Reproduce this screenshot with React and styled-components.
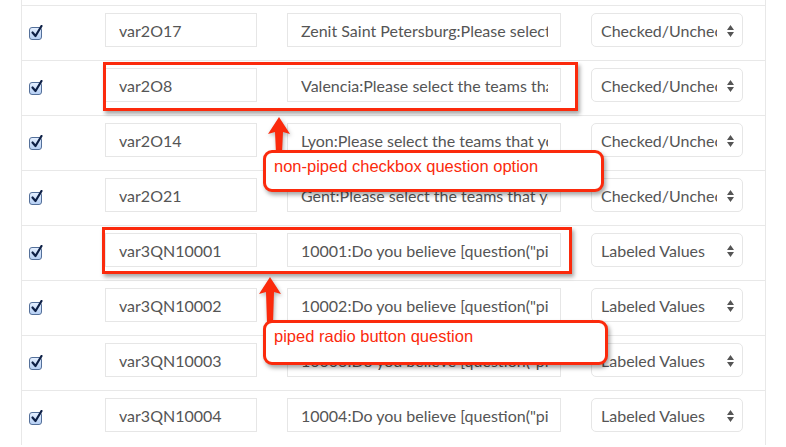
import React from "react";
import styled, { createGlobalStyle } from "styled-components";

const GlobalStyle = createGlobalStyle`
  html, body {
    margin: 0;
    padding: 0;
    background: #fff;
  }
  body {
    font-family: Lato, "Open Sans", sans-serif;
    overflow: hidden;
  }
`;

const Page = styled.div`
  position: relative;
  width: 786px;
  height: 447px;
  overflow: hidden;
  padding: 0 0 0 21px;
  box-sizing: border-box;
`;

const Table = styled.div`
  width: 745px;
  box-sizing: border-box;
  padding-top: 5px;
  border-left: 1px solid #e8e8e8;
  border-right: 1px solid #e8e8e8;
`;

const Row = styled.div`
  display: grid;
  grid-template-columns: 53px 152px 274px 152px;
  column-gap: 30px;
  align-items: start;
  height: 55px;
  box-sizing: border-box;
  padding-top: 7px;
  border-top: 1px solid #e8e8e8;
`;

const CheckCell = styled.div`
  padding: 14px 0 0 7px;
`;

const Check = styled.span`
  position: relative;
  display: block;
  width: 11px;
  height: 11px;
  border: 1px solid #54709a;
  border-radius: 3px;
  background: linear-gradient(#e4efff, #b6cff3);
  svg {
    position: absolute;
    left: 1px;
    top: -3px;
  }
`;

const Field = styled.div`
  height: 34px;
  box-sizing: border-box;
  border: 1px solid #e6e6e6;
  border-radius: ${(p) => (p.$select ? "5px" : "0")};
  padding: ${(p) => (p.$select ? "0 25px 0 9px" : "0 12px 0 13px")};
  display: flex;
  align-items: center;
  position: relative;
  font-size: 16px;
  color: #555;
  white-space: nowrap;
  overflow: hidden;
`;

const FieldText = styled.span`
  display: block;
  overflow: hidden;
`;

const Caret = styled.svg`
  position: absolute;
  right: 7px;
  top: 10px;
`;

const Frame = styled.div`
  position: absolute;
  box-sizing: border-box;
  border: 3px solid #fb2a0c;
  box-shadow: 2px 3px 4px rgba(0, 0, 0, 0.35);
`;

const Callout = styled.div`
  position: absolute;
  box-sizing: border-box;
  background: #fff;
  border: 3px solid #fb2a0c;
  border-radius: 9px;
  box-shadow: 2px 3px 4px rgba(0, 0, 0, 0.35);
  padding: 4px 8px;
  font-family: "Liberation Sans", Arial, sans-serif;
  font-size: 16.5px;
  line-height: 19px;
  color: #fb2a0c;
  white-space: nowrap;
`;

const ArrowSvg = styled.svg`
  position: absolute;
  left: 0;
  top: 0;
  pointer-events: none;
  filter: drop-shadow(1px 2px 2px rgba(0, 0, 0, 0.3));
`;

const rows = [
  ["var2O17", "Zenit Saint Petersburg:Please select the teams that you", "Checked/Unchecked"],
  ["var2O8", "Valencia:Please select the teams that you", "Checked/Unchecked"],
  ["var2O14", "Lyon:Please select the teams that you follow", "Checked/Unchecked"],
  ["var2O21", "Gent:Please select the teams that you follow", "Checked/Unchecked"],
  ["var3QN10001", "10001:Do you believe [question(\"piped\")]", "Labeled Values"],
  ["var3QN10002", "10002:Do you believe [question(\"piped\")]", "Labeled Values"],
  ["var3QN10003", "10003:Do you believe [question(\"piped\")]", "Labeled Values"],
  ["var3QN10004", "10004:Do you believe [question(\"piped\")]", "Labeled Values"],
];

const CheckIcon = () => (
  <Check>
    <svg width="12" height="13" viewBox="0 0 12 13">
      <path d="M1.5 7.5 L4.5 11 L10.5 1" fill="none" stroke="#0d1f45" strokeWidth="2.2" strokeLinecap="round" strokeLinejoin="round" />
    </svg>
  </Check>
);

const Arrow = ({ x, tip, base, bottom }) => (
  <polygon
    fill="#fb2a0c"
    points={`${x},${tip} ${x + 11},${base + 1} ${x + 4},${base - 1} ${x + 3},${bottom} ${x - 3},${bottom} ${x - 4},${base - 1} ${x - 11},${base + 1}`}
  />
);

export default function App() {
  return (
    <>
      <GlobalStyle />
      <Page>
        <Table>
          {rows.map(([name, label, kind]) => (
            <Row key={name}>
              <CheckCell>
                <CheckIcon />
              </CheckCell>
              <Field>
                <FieldText>{name}</FieldText>
              </Field>
              <Field>
                <FieldText>{label}</FieldText>
              </Field>
              <Field $select>
                <FieldText>{kind}</FieldText>
                <Caret width="9" height="14" viewBox="0 0 9 14">
                  <path d="M4.5 1 L8 6 L1 6 Z M1 8 L8 8 L4.5 13 Z" fill="#555" />
                </Caret>
              </Field>
            </Row>
          ))}
        </Table>

        <Frame style={{ left: 103, top: 62, width: 475, height: 49 }} />
        <Frame style={{ left: 102, top: 227, width: 470, height: 47 }} />

        <ArrowSvg width="786" height="447">
          <Arrow x={279} tip={117} base={133} bottom={153} />
          <Arrow x={270} tip={277} base={293} bottom={323} />
        </ArrowSvg>

        <Callout style={{ left: 263, top: 150, width: 341, height: 42 }}>
          non-piped checkbox question option
        </Callout>
        <Callout style={{ left: 263, top: 320, width: 345, height: 45 }}>
          piped radio button question
        </Callout>
      </Page>
    </>
  );
}
